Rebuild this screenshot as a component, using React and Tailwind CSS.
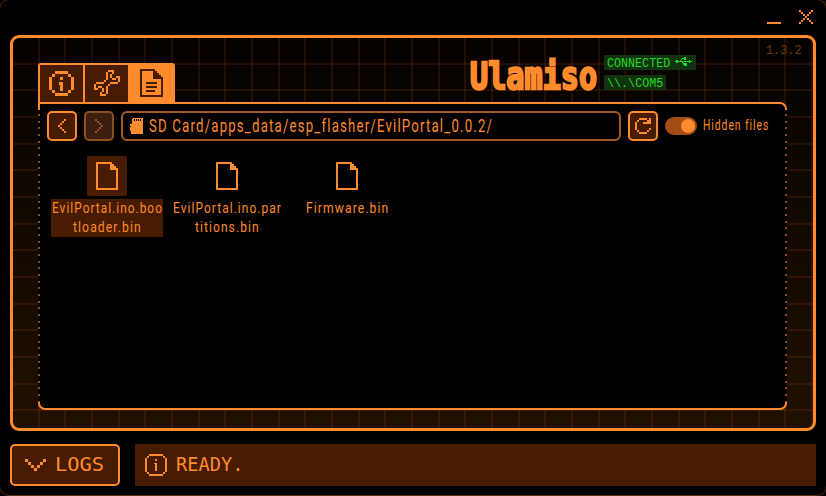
import { useLayoutEffect, useRef, useState } from "react";

// Text squeezed horizontally to a fixed width, for the condensed look.
function Fit({ w, className = "", children }) {
  const ref = useRef(null);
  const [k, setK] = useState(1);
  useLayoutEffect(() => {
    setK(w / ref.current.offsetWidth);
  }, [w]);
  return (
    <span className={"block whitespace-pre " + className} style={{ width: w }}>
      <span ref={ref} className="inline-block origin-left" style={{ transform: `scaleX(${k})` }}>
        {children}
      </span>
    </span>
  );
}

// Icon drawn from rows of pixels.
function Pixels({ rows, unit, className = "" }) {
  const cells = [];
  rows.forEach((row, y) =>
    [...row].forEach((c, x) => {
      if (c === "#") cells.push(<rect key={x + "-" + y} x={x} y={y} width="1" height="1" />);
    })
  );
  const n = Math.max(...rows.map((r) => r.length));
  return (
    <svg
      className={"block shrink-0 " + className}
      width={n * unit}
      height={rows.length * unit}
      viewBox={`0 0 ${n} ${rows.length}`}
      fill="currentColor"
      shapeRendering="crispEdges"
    >
      {cells}
    </svg>
  );
}

const WRENCH = [
  ".......###...",
  "......#..#...",
  "......#.#....",
  "......#.#..##",
  "......#..##.#",
  ".....#......#",
  ".####...####.",
  "#......#.....",
  "#.##..#......",
  "##..#.#......",
  "....#.#......",
  "...#..#......",
  "...###.......",
];
const LEFT = ["...#", "..#.", ".#..", "#...", ".#..", "..#.", "...#"];
const RIGHT = ["#...", ".#..", "..#.", "...#", "..#.", ".#..", "#..."];
const DOWN = ["#.....#", ".#...#.", "..#.#..", "...#..."];
const CLOSE = ["#.....#", ".#...#.", "..#.#..", "...#...", "..#.#..", ".#...#.", "#.....#"];
const REFRESH = ["..####.#", ".#....##", "#...####", "#.......", "#.......", "#......#", ".#....#.", "..####.."];

function InfoBig() {
  return (
    <svg className="block" width="25" height="25" viewBox="0 0 25 25" fill="currentColor" shapeRendering="crispEdges">
      <path d="M6 0h13v3h-13zM6 22h13v3h-13zM0 6h3v13h-3zM22 6h3v13h-3zM3 3h3v3h-3zM19 3h3v3h-3zM3 19h3v3h-3zM19 19h3v3h-3z" />
      <path d="M11 6h3v3h-3zM10 11h4v9h-3v-6h-1z" />
    </svg>
  );
}

function InfoSmall() {
  return (
    <svg className="block" width="22" height="22" viewBox="0 0 22 22" fill="currentColor" shapeRendering="crispEdges">
      <path d="M4 0h14v2h-14zM4 20h14v2h-14zM0 4h2v14h-2zM20 4h2v14h-2zM2 2h2v2h-2zM18 2h2v2h-2zM2 18h2v2h-2zM18 18h2v2h-2z" />
      <path d="M10 5h2v2h-2zM9 9h3v8h-2v-7h-1z" />
    </svg>
  );
}

function FileIcon() {
  return (
    <svg className="block" width="22" height="28" viewBox="0 0 22 28" fill="currentColor" shapeRendering="crispEdges">
      <path d="M0 0h16v2h2v2h2v2h2v22h-22zM2 2v24h18v-18h-6v-6z" fillRule="evenodd" />
    </svg>
  );
}

function DocIcon() {
  return (
    <svg className="block" width="23" height="28" viewBox="0 0 23 28" fill="currentColor" shapeRendering="crispEdges">
      <path d="M0 0h15v2h2v2h2v2h2v2h2v20h-23zM2 2v24h19v-16h-8v-8z" fillRule="evenodd" />
      <path d="M6 13h11v2h-11zM6 17h11v2h-11zM6 21h9v2h-9z" />
    </svg>
  );
}

function SdIcon() {
  return (
    <svg className="block shrink-0" width="13" height="16" viewBox="0 0 13 16" fill="currentColor" shapeRendering="crispEdges">
      <path
        d="M3 0h10v16h-12v-3h-1v-4h1v-1h-1v-2h2v-5h1zM4 1v2h1v-2zM6 1v2h1v-2zM8 1v2h1v-2zM10 1v2h1v-2z"
        fillRule="evenodd"
      />
    </svg>
  );
}

function UsbIcon() {
  return (
    <svg className="block" width="17" height="9" viewBox="0 0 17 9" fill="currentColor" shapeRendering="crispEdges">
      <path d="M0 4h1v-1h2v1h11v-1h1v1h2v1h-2v1h-1v-1h-11v1h-2v-1h-1z" />
      <path d="M5 3h1v1h-1zM6 2h1v1h-1zM7 1h2v-1h2v3h-2v-1h-2zM7 5h1v1h-1zM8 6h1v1h-1zM9 6h3v3h-3v-1h-1v-1h1z" />
    </svg>
  );
}

const ROBOTO = "font-['Roboto',sans-serif] tracking-[0.09em]";
const MONO = "font-['DejaVu_Sans_Mono',monospace]";
const THIN_MONO = "font-['Liberation_Mono',monospace]";

const FILES = [
  { lines: [["EvilPortal.ino.boo", 111], ["tloader.bin", 69]], selected: true },
  { lines: [["EvilPortal.ino.par", 109], ["titions.bin", 65]] },
  { lines: [["Firmware.bin", 83]] },
];

const DOTS =
  "absolute top-[6px] bottom-[6px] w-[2px] bg-[repeating-linear-gradient(180deg,#000_0_4px,#8a4a1a_4px_6px,#000_6px_6.67px)]";

export default function App() {
  return (
    <div className="h-[496px] w-[826px] overflow-hidden bg-black">
      <div className="-mx-px -mt-px flex h-[497px] flex-col rounded-[10px] border border-[#5a2c0c] bg-black text-[#ff8b2c]">
        <header className="flex h-[35px] shrink-0 justify-end gap-[18px] pr-[13px]">
          <div className="mt-[22px] h-[2px] w-[14px] bg-[#ff8b2c]" />
          <Pixels rows={CLOSE} unit={2} className="mt-[10px]" />
        </header>

        <main className="mx-[10px] h-[396px] shrink-0 overflow-hidden rounded-[9px] border-[3px] border-[#ff8b2c] bg-[linear-gradient(180deg,#060200,#201000)]">
          <div className="flex h-full flex-col bg-[repeating-linear-gradient(90deg,transparent_0_24.67px,#ff6a1c1c_24.67px_26.67px),repeating-linear-gradient(180deg,transparent_0_24.67px,#ff6a1c1c_24.67px_26.67px)] px-[25px]">
            <div className="relative flex h-[64px] shrink-0 items-end">
              <nav className="flex h-[39px] w-[137px] overflow-hidden rounded-t-[3px] bg-[#ff8b2c] pt-[2px] pl-[2px]">
                <div className="flex w-[43px] justify-center bg-[#481c00] pt-[6px]">
                  <InfoBig />
                </div>
                <div className="ml-[2px] flex w-[43px] justify-center bg-[#481c00] pt-[5px]">
                  <Pixels rows={WRENCH} unit={2} />
                </div>
                <div className="ml-[12px] pt-[4px] text-[#481c00]">
                  <DocIcon />
                </div>
              </nav>
              <h1 className={"mb-[4px] ml-[295px] h-[44px] text-[38px] leading-[44px] font-bold [-webkit-text-stroke:2.4px_#ff8b2c] [text-shadow:-1px_0_#8a5a18] " + MONO}>
                <Fit w={127}>Ulamiso</Fit>
              </h1>
              <div className={"ml-[7px] flex flex-col items-start gap-[5px] self-start pt-[17px] text-[13.2px] leading-[15px] text-[#23d823] " + THIN_MONO}>
                <div className="flex h-[15px] w-[92px] gap-[5px] bg-[#123310] pt-px pl-[3px]">
                  <Fit w={63}>CONNECTED</Fit>
                  <span className="pt-px">
                    <UsbIcon />
                  </span>
                </div>
                <div className="h-[15px] w-[62px] bg-[#123310] pt-px pl-[3px]">
                  <Fit w={56}>{"\\\\.\\COM5"}</Fit>
                </div>
              </div>
              <div className={"absolute top-[6px] right-[-14px] text-[12.5px] leading-[14px] text-[#6a3a12] " + THIN_MONO}>
                <Fit w={36}>1.3.2</Fit>
              </div>
            </div>

            <section className="relative h-[308px] w-[749px] shrink-0 rounded-[7px] rounded-tl-none border-2 border-[#ff8b2c] bg-black">
              <div className={DOTS + " left-[-2px]"} />
              <div className={DOTS + " right-[-2px]"} />
              <div className="flex h-[37px] gap-[7px] pt-[7px] pl-[7px]">
                <button className="flex h-[30px] w-[30px] items-center justify-center rounded-[5px] border-2 border-[#ff8b2c] bg-[#481c00]">
                  <Pixels rows={LEFT} unit={2} />
                </button>
                <button className="flex h-[30px] w-[30px] items-center justify-center rounded-[5px] border-2 border-[#8f4d1e] bg-[#3a1e10] text-[#9a5220]">
                  <Pixels rows={RIGHT} unit={2} />
                </button>
                <div className="flex h-[30px] w-[500px] items-center gap-[6px] rounded-[6px] border-2 border-[#a35a24] pl-[7px]">
                  <SdIcon />
                  <div className={"text-[17.5px] leading-[26px] " + ROBOTO}>
                    <Fit w={344}>SD Card/apps_data/esp_flasher/EvilPortal_0.0.2/</Fit>
                  </div>
                </div>
                <button className="flex h-[30px] w-[30px] items-center justify-center rounded-[5px] border-2 border-[#ff8b2c] bg-[#481c00]">
                  <Pixels rows={REFRESH} unit={2} />
                </button>
                <div className="mt-[6px] flex h-[18px] w-[32px] items-center justify-end rounded-full bg-[#a34d14] pr-[2px]">
                  <div className="size-[14px] rounded-full bg-[#ff8b2c]" />
                </div>
                <div className={"-ml-px text-[14px] leading-[29px] " + ROBOTO}>
                  <Fit w={66}>Hidden files</Fit>
                </div>
              </div>

              <div className="flex pt-[15px] pl-[7px]">
                {FILES.map((f) => (
                  <div key={f.lines[0][0]} className="flex w-[120px] flex-col items-center">
                    <div className={"flex size-[40px] items-center justify-center rounded-[2px] " + (f.selected ? "bg-[#481c00]" : "")}>
                      <FileIcon />
                    </div>
                    <div
                      className={
                        "mt-[3px] flex w-[112px] flex-col items-center text-[15.5px] leading-[19px] " +
                        ROBOTO +
                        (f.selected ? " bg-[#481c00]" : "")
                      }
                    >
                      {f.lines.map(([t, w]) => (
                        <Fit key={t} w={w}>
                          {t}
                        </Fit>
                      ))}
                    </div>
                  </div>
                ))}
              </div>
            </section>
          </div>
        </main>

        <footer className={"mx-[10px] mt-[13px] flex h-[42px] gap-[15px] text-[19.5px] leading-[44px] " + MONO}>
          <button className="flex w-[110px] items-center gap-[8px] rounded-[5px] border-2 border-[#ff8b2c] bg-[#481c00] pl-[13px]">
            <Pixels rows={DOWN} unit={3} />
            <Fit w={49}>LOGS</Fit>
          </button>
          <div className="flex w-[681px] items-center gap-[9px] bg-[#481c00] pl-[10px]">
            <InfoSmall />
            <Fit w={67}>READY.</Fit>
          </div>
        </footer>
      </div>
    </div>
  );
}
